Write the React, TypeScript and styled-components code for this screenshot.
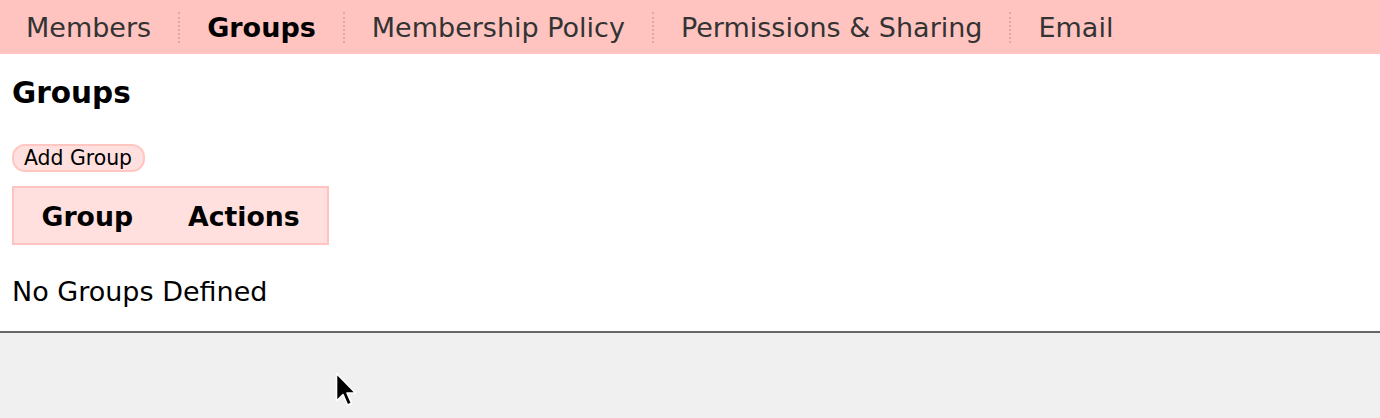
import React from "react";
import styled, { createGlobalStyle } from "styled-components";

const Global = createGlobalStyle`
  html, body { margin: 0; padding: 0; background: #f0f0f0; }
  body { font-family: "DejaVu Sans", Verdana, sans-serif; color: #000; }
`;

const Page = styled.div`
  position: relative;
  width: 1380px;
  height: 418px;
  overflow: hidden;
  background: #f0f0f0;
`;

const TabBar = styled.ul`
  display: flex;
  align-items: center;
  margin: 0;
  padding: 0 0 0 26px;
  height: 54px;
  list-style: none;
  background: #ffc4c0;
`;

const Tab = styled.li<{ $active?: boolean; $first?: boolean }>`
  display: flex;
  align-items: center;
  font-size: 27px;
  line-height: 31px;
  color: ${(p) => (p.$active ? "#000" : "#333")};
  font-weight: ${(p) => (p.$active ? 700 : 400)};
  padding: ${(p) => (p.$first ? "0 27px 0 0" : "0 27px")};
  border-left: ${(p) => (p.$first ? "none" : "2px dotted #d9aaa8")};
  height: 31px;
`;

const Content = styled.main`
  background: #fff;
  padding: 22px 12px 24px;
  border-bottom: 2px solid #666;
`;

const Heading = styled.h2`
  margin: 0 0 34px;
  font-size: 29.5px;
  line-height: 34px;
  font-weight: 700;
`;

const AddButton = styled.button`
  display: block;
  box-sizing: border-box;
  height: 28px;
  padding: 0 11px 0 10px;
  font-family: "DejaVu Sans", Verdana, sans-serif;
  font-size: 20.4px;
  line-height: 24px;
  color: #000;
  background: #ffe0de;
  border: 2px solid #ffc6c2;
  border-radius: 13px;
  margin-bottom: 14px;
`;

const Table = styled.table`
  border-collapse: collapse;
  background: #ffe0de;
  border: 2px solid #ffc4c2;
`;

const Th = styled.th`
  font-size: 26.7px;
  line-height: 31px;
  font-weight: 700;
  padding: 13px 27.5px 11px;
  text-align: left;
`;

const Empty = styled.p`
  margin: 31px 0 0;
  font-size: 27px;
  line-height: 31px;
`;

const Cursor = styled.svg`
  position: absolute;
  left: 333px;
  top: 371px;
`;

export default function App() {
  return (
    <Page>
      <Global />
      <TabBar>
        <Tab $first>Members</Tab>
        <Tab $active>Groups</Tab>
        <Tab>Membership Policy</Tab>
        <Tab>Permissions &amp; Sharing</Tab>
        <Tab>Email</Tab>
      </TabBar>
      <Content>
        <Heading>Groups</Heading>
        <AddButton>Add Group</AddButton>
        <Table>
          <thead>
            <tr>
              <Th>Group</Th>
              <Th>Actions</Th>
            </tr>
          </thead>
        </Table>
        <Empty>No Groups Defined</Empty>
      </Content>
      <Cursor width="28" height="40" viewBox="0 0 28 40">
        <path
          d="M3.5 2.5 L3.5 30 L10 23.5 L14.5 34 L18.5 32.3 L14 22 L22.5 22 Z"
          fill="#000"
          stroke="#fff"
          strokeWidth="1.6"
          strokeLinejoin="round"
        />
      </Cursor>
    </Page>
  );
}
